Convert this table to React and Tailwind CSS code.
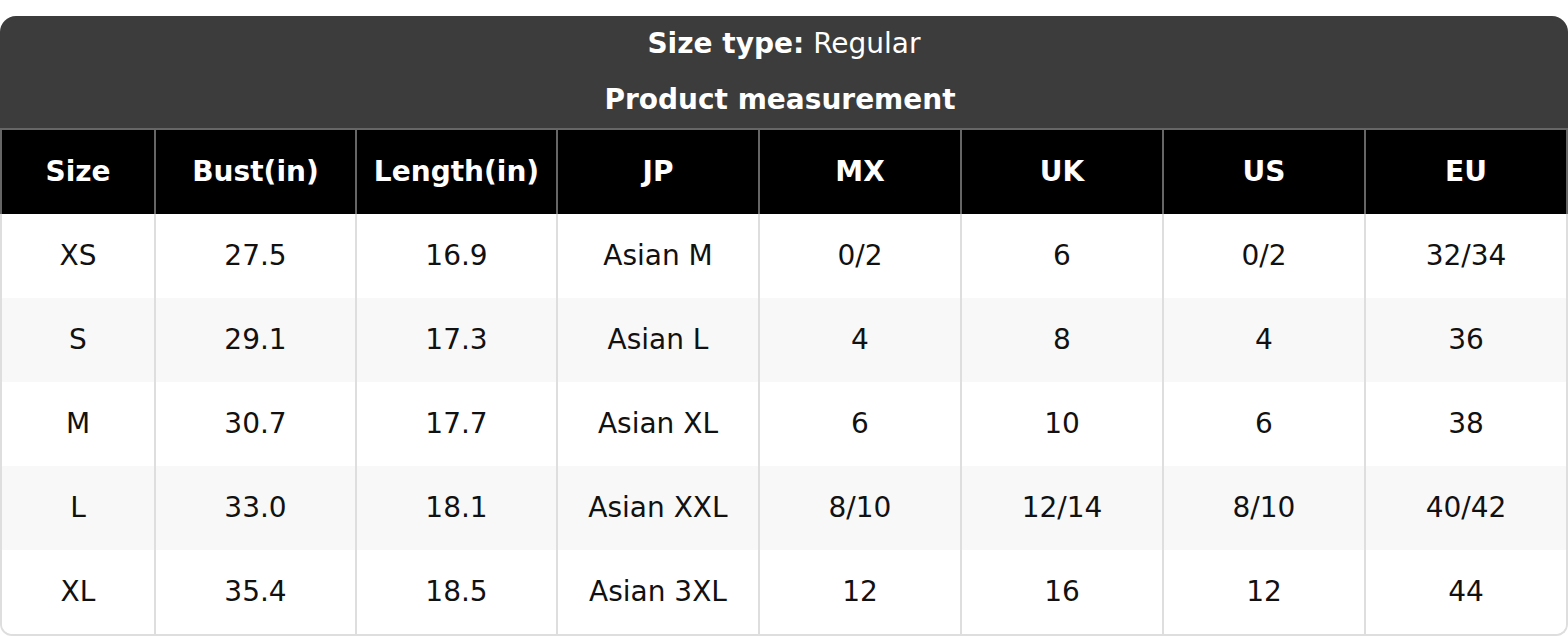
export default function App() {
  const cols = ["Size", "Bust(in)", "Length(in)", "JP", "MX", "UK", "US", "EU"];
  const rows = [
    ["XS", "27.5", "16.9", "Asian M", "0/2", "6", "0/2", "32/34"],
    ["S", "29.1", "17.3", "Asian L", "4", "8", "4", "36"],
    ["M", "30.7", "17.7", "Asian XL", "6", "10", "6", "38"],
    ["L", "33.0", "18.1", "Asian XXL", "8/10", "12/14", "8/10", "40/42"],
    ["XL", "35.4", "18.5", "Asian 3XL", "12", "16", "12", "44"],
  ];
  const grid = "grid grid-cols-[152px_201px_201px_202px_202px_202px_202px_202px]";
  return (
    <div className="w-[1568px] h-[636px] bg-white pt-4" style={{ fontFamily: '"DejaVu Sans", "Liberation Sans", sans-serif' }}>
      <div className="rounded-t-2xl overflow-hidden bg-[#3c3c3c] text-white text-[28px]">
        <div className="h-[56px] flex items-center justify-center">
          <span className="font-bold">Size type:</span>
          <span className="ml-[9px]">Regular</span>
        </div>
        <div className="h-[56px] flex items-center justify-center font-bold pr-[8px]">Product measurement</div>
      </div>
      <div className={`${grid} bg-black text-white text-[28px] font-bold border-t-2 border-x-2 border-[#666]`}>
        {cols.map((c, i) => (
          <div key={c} className={`h-[84px] flex items-center justify-center ${i > 0 ? "border-l-2 border-[#666]" : ""}`}>
            {c}
          </div>
        ))}
      </div>
      <div className="border-x-2 border-b-2 border-[#dedede] rounded-b-xl overflow-hidden">
        {rows.map((r, ri) => (
          <div key={ri} className={`${grid} text-[28px] text-[#111] ${ri % 2 === 1 ? "bg-[#f8f8f8]" : "bg-white"}`}>
            {r.map((v, i) => (
              <div key={i} className={`h-[84px] flex items-center justify-center ${i > 0 ? "border-l-2 border-[#dedede]" : ""}`}>
                {v}
              </div>
            ))}
          </div>
        ))}
      </div>
    </div>
  );
}
